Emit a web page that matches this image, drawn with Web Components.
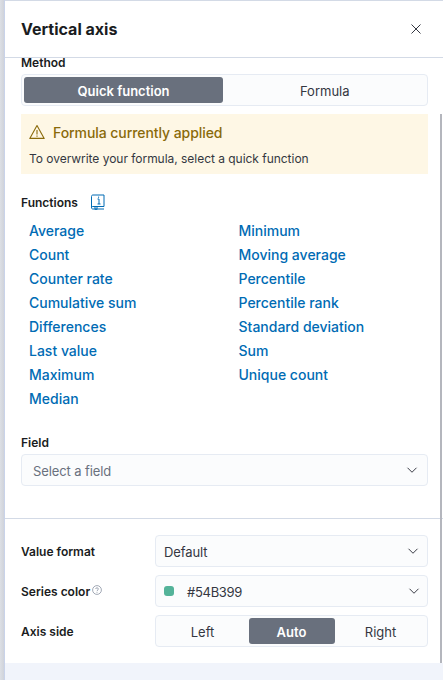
<!DOCTYPE html>
<html>
<head>
<meta charset="utf-8">
<title>Vertical axis</title>
<style>
  html, body { margin: 0; height: 100%; }
  body {
    font-family: Inter, "Liberation Sans", sans-serif;
    overflow: hidden;
    background: linear-gradient(90deg, #dcdfe5 0, #d0d3da 4px, #c9d3ea 4px, #c9d3ea 5px, #f1f4fb 5px);
  }
</style>
</head>
<body>
<axis-flyout>
  <span slot="title">Vertical axis</span>

  <form-row label="Method">
    <button-group options="Quick function|Formula" selected="0"></button-group>
  </form-row>

  <warn-callout title="Formula currently applied">To overwrite your formula, select a quick function</warn-callout>

  <function-list></function-list>

  <form-row label="Field" class="field">
    <select-box placeholder="Select a field" chevron-right="9"></select-box>
  </form-row>

  <div slot="footer">
    <side-row label="Value format"><select-box value="Default" chevron-right="8"></select-box></side-row>
    <side-row label="Series color" help><select-box value="#54B399" swatch="#54B399" chevron-right="7"></select-box></side-row>
    <side-row label="Axis side"><button-group options="Left|Auto|Right" selected="1"></button-group></side-row>
  </div>
</axis-flyout>

<script>
const CHEVRON = `<svg width="12" height="12" viewBox="0 0 16 16"><path d="M2 5 L8 11 L14 5" fill="none" stroke="#343741" stroke-width="1.3"/></svg>`;

class AxisFlyout extends HTMLElement {
    constructor() {
        super();
        this.attachShadow({mode: "open"}).innerHTML = `
<style>
    :host {
      display: flex;
      flex-direction: column;
      position: relative;
      height: 663px;
      margin-left: 5px;
      background: #fff;
      border-top: 1px solid #d3dae6;
      box-sizing: border-box;
      color: #1a1c21;
    }
    header {
      display: flex;
      justify-content: space-between;
      align-items: center;
      height: 57px;
      flex: none;
      box-sizing: border-box;
      padding: 0 22px 0 16px;
      border-bottom: 1px solid #d3dae6;
      font-size: 16px;
      font-weight: 700;
    }
    .close { display: flex; width: 10px; height: 10px; }
    main { padding: 0 15px 0 16px; flex: 1; margin-top: -1px; }
    footer { border-top: 1px solid #d3dae6; padding: 16px 15px 8px 16px; }
    .scroll {
      position: absolute;
      top: 113px;
      bottom: 0;
      right: 1px;
      width: 2px;
      background: #b4b6bd;
    }
</style>
<header>
  <slot name="title"></slot>
  <span class="close"><svg width="10" height="10" viewBox="0 0 10 10"><path d="M.5 .5 L9.5 9.5 M9.5 .5 L.5 9.5" stroke="#343741" stroke-width="1" fill="none"/></svg></span>
</header>
<main><slot></slot></main>
<footer><slot name="footer"></slot></footer>
<div class="scroll"></div>`;
    }
}

class FormRow extends HTMLElement {
    constructor() {
        super();
        this.attachShadow({mode: "open"}).innerHTML = `
<style>
    :host { display: block; }
    :host(.field) { margin-top: 26px; }
    label {
      display: block;
      font-size: 12px;
      font-weight: 600;
      line-height: 12px;
      margin-bottom: 5px;
    }
</style>
<label>${this.getAttribute("label")}</label>
<slot></slot>`;
    }
}

class SideRow extends HTMLElement {
    constructor() {
        super();
        const help = this.hasAttribute("help")
            ? `<svg class="help" width="10" height="10" viewBox="0 0 10 10"><circle cx="5" cy="5" r="4.4" fill="none" stroke="#8a93a3" stroke-width=".8"/><path d="M3.6 4 C3.6 2.4 6.4 2.4 6.4 4 C6.4 5 5 5 5 6.2 M5 7 V7.8" fill="none" stroke="#8a93a3" stroke-width=".8"/></svg>`
            : "";
        this.attachShadow({mode: "open"}).innerHTML = `
<style>
    :host {
      display: grid;
      grid-template-columns: 134px 1fr;
      align-items: center;
      margin-bottom: 8px;
    }
    label {
      display: flex;
      font-size: 12px;
      font-weight: 600;
    }
    .help { margin: 1px 0 0 1.5px; }
</style>
<label>${this.getAttribute("label")}${help}</label>
<slot></slot>`;
    }
}

class ButtonGroup extends HTMLElement {
    constructor() {
        super();
        const options = this.getAttribute("options").split("|");
        const selected = Number(this.getAttribute("selected"));
        const buttons = options.map((o, i) =>
            `<span class="${i === selected ? "on" : ""}">${o}</span>`).join("");
        this.attachShadow({mode: "open"}).innerHTML = `
<style>
    :host {
      display: grid;
      grid-auto-flow: column;
      grid-auto-columns: 1fr;
      height: 32px;
      box-sizing: border-box;
      padding: 2px;
      background: #fbfcfd;
      border: 1px solid #e6ebf3;
      border-radius: 4px;
      font-size: 13px;
      color: #343741;
    }
    span {
      display: flex;
      align-items: center;
      justify-content: center;
      padding-top: 1px;
      box-sizing: border-box;
      border-radius: 3px;
    }
    .on { background: #69707d; color: #fff; font-weight: 600; margin: 0 1.5px; }
    .on:first-of-type { margin-left: 0; }
</style>
${buttons}`;
    }
}

class WarnCallout extends HTMLElement {
    constructor() {
        super();
        this.attachShadow({mode: "open"}).innerHTML = `
<style>
    :host {
      display: block;
      margin-top: 8px;
      padding: 8px;
      height: 60px;
      box-sizing: border-box;
      background: #fef7e5;
      font-size: 12px;
      letter-spacing: -.03px;
      color: #343741;
    }
    .title {
      display: flex;
      align-items: center;
      gap: 8px;
      height: 20px;
      font-size: 14px;
      letter-spacing: -.07px;
      font-weight: 500;
      color: #8a6a0a;
      margin-bottom: 9px;
    }
</style>
<div class="title">
  <svg width="16" height="16" viewBox="0 0 16 16"><path d="M8 1.6 L15.2 14.4 H0.8 Z" fill="none" stroke="#8a6a0a" stroke-width="1.1" stroke-linejoin="round"/><path d="M8 6 V10.5 M8 11.6 V12.8" stroke="#8a6a0a" stroke-width="1.1"/></svg>
  <span>${this.getAttribute("title")}</span>
</div>
<slot></slot>`;
    }
}

class FunctionList extends HTMLElement {
    constructor() {
        super();
        const left = ["Average", "Count", "Counter rate", "Cumulative sum", "Differences", "Last value", "Maximum", "Median"];
        const right = ["Minimum", "Moving average", "Percentile", "Percentile rank", "Standard deviation", "Sum", "Unique count"];
        const col = list => `<ul>${list.map(f => `<li>${f}</li>`).join("")}</ul>`;
        this.attachShadow({mode: "open"}).innerHTML = `
<style>
    :host { display: block; margin-top: 20px; }
    .head {
      display: flex;
      align-items: center;
      gap: 13px;
      height: 16px;
      font-size: 12px;
      font-weight: 600;
    }
    .cols { display: grid; grid-template-columns: 209.5px 1fr; margin-top: 9px; padding-left: 8px; }
    ul { list-style: none; margin: 0; padding: 0; }
    li { height: 24px; line-height: 24px; font-size: 14px; font-weight: 500; color: #006bb4; }
</style>
<div class="head">
  <span>Functions</span>
  <svg width="14" height="16" viewBox="0 0 14 16"><path d="M2 1 H13 V12.5 H2 C1 12.5 .5 13 .5 13.8 V2.5 C.5 1.5 1 1 2 1 Z M.5 13.8 C.5 14.6 1 15 2 15 H13 M4 13 V15.5 L5 15 L6 15.5 V13" fill="none" stroke="#006bb4" stroke-width="1"/><path d="M6.5 5 H8 V10 M6.5 10 H9.5 M7.6 2.6 V3.8" fill="none" stroke="#006bb4" stroke-width="1"/></svg>
</div>
<div class="cols">${col(left)}${col(right)}</div>`;
    }
}

class SelectBox extends HTMLElement {
    constructor() {
        super();
        const ph = this.getAttribute("placeholder");
        const swatch = this.getAttribute("swatch");
        const dot = swatch ? `<i style="background:${swatch}"></i>` : "";
        const left = ph ? 11 : 8;
        this.attachShadow({mode: "open"}).innerHTML = `
<style>
    :host {
      display: flex;
      align-items: center;
      justify-content: space-between;
      height: 32px;
      box-sizing: border-box;
      padding: 0 ${this.getAttribute("chevron-right")}px 0 ${left}px;
      background: #fbfcfd;
      border: 1px solid #e6ebf3;
      border-radius: 4px;
      font-size: 13px;
      color: ${ph ? "#69707d" : "#343741"};
    }
    .val { display: flex; align-items: center; padding-top: 2px; letter-spacing: ${swatch ? "-.3px" : "-.1px"}; }
    i { width: 10px; height: 10px; border-radius: 3px; margin: -2px 13px 0 0; }
</style>
<span class="val">${dot}${ph || this.getAttribute("value")}</span>
${CHEVRON}`;
    }
}

customElements.define("axis-flyout", AxisFlyout);
customElements.define("form-row", FormRow);
customElements.define("side-row", SideRow);
customElements.define("button-group", ButtonGroup);
customElements.define("warn-callout", WarnCallout);
customElements.define("function-list", FunctionList);
customElements.define("select-box", SelectBox);
</script>
</body>
</html>
